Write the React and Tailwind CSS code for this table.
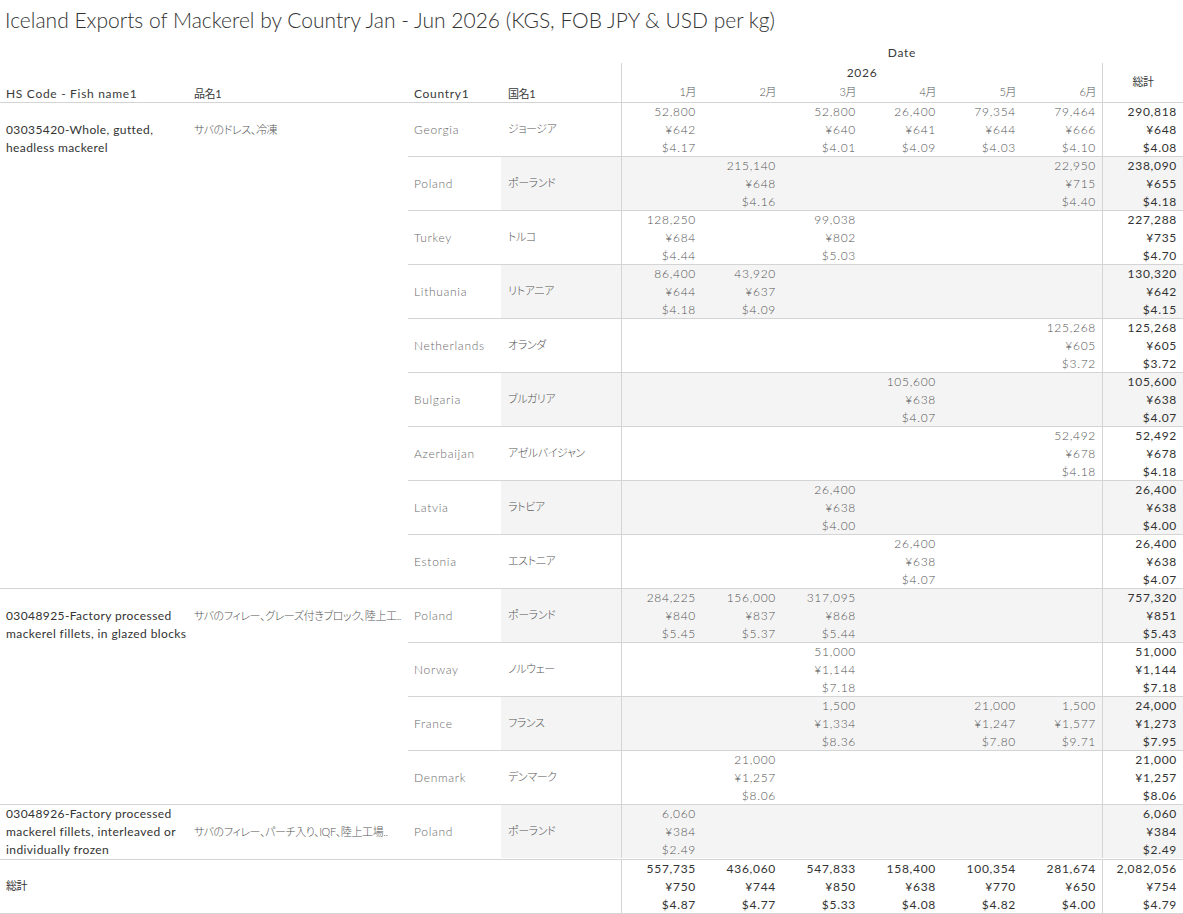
import React from 'react';

const months = ['1月', '2月', '3月', '4月', '5月', '6月'];

// kg, JPY/kg, USD/kg
const v = (kg, jpy, usd) => [kg, jpy, usd];

const groups = [
  {
    hs: ['03035420-Whole, gutted,', 'headless mackerel'],
    hsPad: 'pt-[18px]',
    name: 'サバのドレス、冷凍',
    rows: [
      { en: 'Georgia', jp: 'ジョージア', cells: [v('52,800', '¥642', '$4.17'), null, v('52,800', '¥640', '$4.01'), v('26,400', '¥641', '$4.09'), v('79,354', '¥644', '$4.03'), v('79,464', '¥666', '$4.10')], total: v('290,818', '¥648', '$4.08') },
      { en: 'Poland', jp: 'ポーランド', cells: [null, v('215,140', '¥648', '$4.16'), null, null, null, v('22,950', '¥715', '$4.40')], total: v('238,090', '¥655', '$4.18') },
      { en: 'Turkey', jp: 'トルコ', cells: [v('128,250', '¥684', '$4.44'), null, v('99,038', '¥802', '$5.03'), null, null, null], total: v('227,288', '¥735', '$4.70') },
      { en: 'Lithuania', jp: 'リトアニア', cells: [v('86,400', '¥644', '$4.18'), v('43,920', '¥637', '$4.09'), null, null, null, null], total: v('130,320', '¥642', '$4.15') },
      { en: 'Netherlands', jp: 'オランダ', cells: [null, null, null, null, null, v('125,268', '¥605', '$3.72')], total: v('125,268', '¥605', '$3.72') },
      { en: 'Bulgaria', jp: 'ブルガリア', cells: [null, null, null, v('105,600', '¥638', '$4.07'), null, null], total: v('105,600', '¥638', '$4.07') },
      { en: 'Azerbaijan', jp: 'アゼルバイジャン', cells: [null, null, null, null, null, v('52,492', '¥678', '$4.18')], total: v('52,492', '¥678', '$4.18') },
      { en: 'Latvia', jp: 'ラトビア', cells: [null, null, v('26,400', '¥638', '$4.00'), null, null, null], total: v('26,400', '¥638', '$4.00') },
      { en: 'Estonia', jp: 'エストニア', cells: [null, null, null, v('26,400', '¥638', '$4.07'), null, null], total: v('26,400', '¥638', '$4.07') },
    ],
  },
  {
    hs: ['03048925-Factory processed', 'mackerel fillets, in glazed blocks'],
    hsPad: 'pt-[18px]',
    name: 'サバのフィレー、グレーズ付きブロック、陸上工..',
    rows: [
      { en: 'Poland', jp: 'ポーランド', cells: [v('284,225', '¥840', '$5.45'), v('156,000', '¥837', '$5.37'), v('317,095', '¥868', '$5.44'), null, null, null], total: v('757,320', '¥851', '$5.43') },
      { en: 'Norway', jp: 'ノルウェー', cells: [null, null, v('51,000', '¥1,144', '$7.18'), null, null, null], total: v('51,000', '¥1,144', '$7.18') },
      { en: 'France', jp: 'フランス', cells: [null, null, v('1,500', '¥1,334', '$8.36'), null, v('21,000', '¥1,247', '$7.80'), v('1,500', '¥1,577', '$9.71')], total: v('24,000', '¥1,273', '$7.95') },
      { en: 'Denmark', jp: 'デンマーク', cells: [null, v('21,000', '¥1,257', '$8.06'), null, null, null, null], total: v('21,000', '¥1,257', '$8.06') },
    ],
  },
  {
    hs: ['03048926-Factory processed', 'mackerel fillets, interleaved or', 'individually frozen'],
    hsPad: 'pt-0',
    name: 'サバのフィレー、パーチ入り、IQF、陸上工場..',
    rows: [
      { en: 'Poland', jp: 'ポーランド', cells: [v('6,060', '¥384', '$2.49'), null, null, null, null, null], total: v('6,060', '¥384', '$2.49') },
    ],
  },
];

const grandTotals = [
  v('557,735', '¥750', '$4.87'),
  v('436,060', '¥744', '$4.77'),
  v('547,833', '¥850', '$5.33'),
  v('158,400', '¥638', '$4.08'),
  v('100,354', '¥770', '$4.82'),
  v('281,674', '¥650', '$4.00'),
];
const grandTotal = v('2,082,056', '¥754', '$4.79');

// Japanese labels: proportional kana, a bit smaller than the latin text
const jpText = "[font-feature-settings:'palt'] text-[11px] tracking-[-0.4px]";

const Cell = ({ vals, strong }) => (
  <div
    className={`w-[80px] h-full pr-[6px] text-right leading-[18px] ${
      strong ? 'text-[#333333]' : 'text-[#555555] font-light'
    }`}
  >
    {vals && vals.map((t, i) => <div key={i}>{t}</div>)}
  </div>
);

const CountryRow = ({ row, shaded, last }) => {
  const bg = shaded ? 'bg-[#f4f4f4]' : '';
  return (
    <div className={`flex ${last ? 'h-[53px]' : 'h-[54px] border-b border-[#d4d4d4]'}`}>
      <div className="w-[93px] pl-[6px] flex items-center text-[#6a6a6a] font-light">{row.en}</div>
      <div className={`w-[120px] pl-[7px] flex items-center text-[#555555] font-light ${jpText} ${bg}`}>{row.jp}</div>
      <div className={`w-[481px] flex border-l border-[#d4d4d4] ${bg}`}>
        {row.cells.map((c, i) => (
          <Cell key={i} vals={c} />
        ))}
      </div>
      <div className={`w-[81px] border-l border-[#d4d4d4] ${bg}`}>
        <Cell vals={row.total} strong />
      </div>
    </div>
  );
};

export default function App() {
  let rowIndex = 0;

  return (
    <div className="w-[1183px] h-[914px] overflow-hidden bg-white text-[12px] font-['Lato','Noto_Sans_CJK_JP',sans-serif] tracking-[0.7px]">
      {/* Title */}
      <div className="h-[40px] pl-[5px] text-[21px] leading-[40px] font-light text-[#333333] tracking-normal whitespace-nowrap">
        Iceland Exports of Mackerel by Country Jan - Jun 2026 (KGS, FOB JPY &amp; USD per kg)
      </div>

      {/* Column headers */}
      <div className="flex h-[63px] border-b border-[#d4d4d4]">
        <div className="w-[621px] flex items-end text-[#3a3a3a] leading-[16px]">
          <div className="w-[188px] pl-[6px]">HS Code - Fish name1</div>
          <div className={`w-[220px] pl-[6px] ${jpText}`}>品名1</div>
          <div className="w-[93px] pl-[6px]">Country1</div>
          <div className={`w-[120px] pl-[7px] ${jpText}`}>国名1</div>
        </div>
        <div className="w-[562px] flex flex-col">
          <div className="h-[23px] flex items-end justify-center pb-[1px] leading-[18px] text-[#3a3a3a]">Date</div>
          <div className="flex flex-1">
            <div className="w-[481px] border-l border-[#d4d4d4] flex flex-col">
              <div className="h-[20px] flex items-center justify-center text-[#3a3a3a]">2026</div>
              <div className="h-[19px] flex items-center">
                {months.map((m) => (
                  <div key={m} className={`w-[80px] pr-[6px] text-right text-[#555555] font-light ${jpText}`}>
                    {m}
                  </div>
                ))}
              </div>
            </div>
            <div className={`w-[81px] border-l border-[#d4d4d4] flex items-center justify-center text-[#3a3a3a] ${jpText}`}>
              総計
            </div>
          </div>
        </div>
      </div>

      {/* Body */}
      {groups.map((g) => (
        <div key={g.hs[0]} className="flex border-b border-[#d4d4d4]">
          <div className={`w-[188px] pl-[6px] leading-[18px] text-[#333333] whitespace-nowrap tracking-[0.4px] ${g.hsPad}`}>
            {g.hs.map((l) => (
              <div key={l}>{l}</div>
            ))}
          </div>
          <div className={`w-[220px] pl-[6px] pt-[18px] leading-[18px] text-[#555555] font-light whitespace-nowrap overflow-hidden ${jpText}`}>
            {g.name}
          </div>
          <div className="w-[775px] flex flex-col">
            {g.rows.map((r, i) => {
              rowIndex += 1;
              return (
                <CountryRow
                  key={r.en + i}
                  row={r}
                  shaded={rowIndex % 2 === 0}
                  last={i === g.rows.length - 1}
                />
              );
            })}
          </div>
        </div>
      ))}

      {/* Grand total */}
      <div className="flex h-[54px] border-b border-[#d4d4d4]">
        <div className={`w-[621px] pl-[6px] flex items-center text-[#333333] ${jpText}`}>総計</div>
        <div className="w-[481px] flex border-l border-[#d4d4d4]">
          {grandTotals.map((c, i) => (
            <Cell key={i} vals={c} strong />
          ))}
        </div>
        <div className="w-[81px] border-l border-[#d4d4d4]">
          <Cell vals={grandTotal} strong />
        </div>
      </div>
    </div>
  );
}
